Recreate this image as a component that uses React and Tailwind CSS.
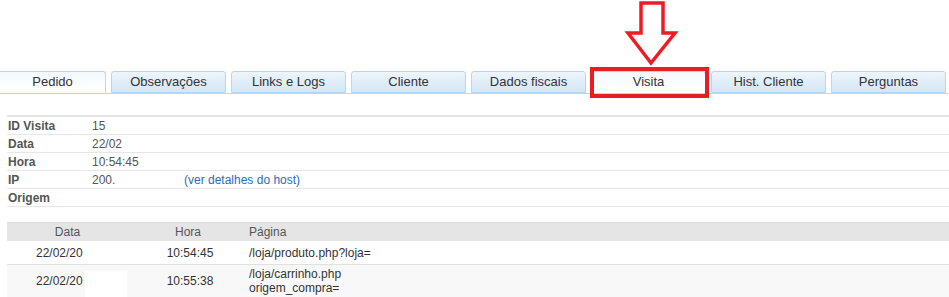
import React from "react";

const tabs = [
  { label: "Pedido", active: true },
  { label: "Observações" },
  { label: "Links e Logs" },
  { label: "Cliente" },
  { label: "Dados fiscais" },
  { label: "Visita", active: true, marked: true },
  { label: "Hist. Cliente" },
  { label: "Perguntas" },
];

const info = [
  ["ID Visita", "15"],
  ["Data", "22/02"],
  ["Hora", "10:54:45"],
  ["IP", "200.", "(ver detalhes do host)"],
  ["Origem", ""],
];

function Tab({ label, active, marked, first }) {
  return (
    <div className={`relative ${first ? "w-[106px]" : "w-[115px]"} shrink-0`}>
      <div
        className={`h-[22px] flex items-center justify-center text-[13px] text-[#333] border border-[#b9d6f0] rounded-t-[3px] ${
          active
            ? "bg-gradient-to-b from-[#f4f9fe] to-[#ffffff] border-b-white"
            : "bg-gradient-to-b from-[#eef5fc] to-[#d3e6f7]"
        } ${first ? "border-l-0 rounded-tl-none" : ""}`}
      >
        {label}
      </div>
      {marked && (
        <div className="absolute left-[-1px] top-[-4px] w-[119px] h-[31px] border-[4px] border-[#ec1c24] pointer-events-none" />
      )}
    </div>
  );
}

export default function App() {
  return (
    <div className="w-[949px] h-[297px] bg-white overflow-hidden font-['Liberation_Sans',Arial,sans-serif] relative">
      <svg className="absolute left-[624px] top-0" width="56" height="68" viewBox="0 0 56 68">
        <polygon
          points="17,3 39,3 39,33 51,33 27,63 4,33 17,33"
          fill="none"
          stroke="#ec1c24"
          strokeWidth="3.5"
          strokeLinejoin="miter"
        />
      </svg>

      <div className="pt-[71px]">
        <div className="flex gap-[5px] border-b border-[#b9d6f0]">
          {tabs.map((t, i) => (
            <Tab key={t.label} {...t} first={i === 0} />
          ))}
        </div>
      </div>

      <div className="ml-[7px] mt-[21px] border-t-2 border-[#e3e3e3]">
        {info.map(([k, v, link]) => (
          <div key={k} className="flex h-[18px] items-center border-b border-[#e6e6e6] text-[12px]">
            <div className="w-[85px] pl-[1px] font-bold text-[#555]">{k}</div>
            <div className="w-[92px] text-[#555]">{v}</div>
            {link && <a className="text-[#2a6ebb]">{link}</a>}
          </div>
        ))}
      </div>

      <div className="ml-[7px] mt-[15px] text-[12px] text-[#333]">
        <div className="flex h-[19px] items-center bg-[#e5e5e5] text-[#555] border-t border-[#dcdcdc]">
          <div className="w-[121px] text-center">Data</div>
          <div className="w-[120px] text-center">Hora</div>
          <div className="pl-[1px]">Página</div>
        </div>
        <div className="flex h-[24px] items-center bg-white border-b border-[#e1e1e1]">
          <div className="w-[121px] pl-[29px]">22/02/20</div>
          <div className="w-[120px] text-center pl-[4px]">10:54:45</div>
          <div className="pl-[1px]">/loja/produto.php?loja=</div>
        </div>
        <div className="flex h-[32px] items-center bg-[#f8f8f8]">
          <div className="w-[121px] pl-[29px] flex items-center h-full">
            <span>22/02/20</span>
            <span className="ml-[2px] mt-[6px] w-[42px] h-[26px] bg-white" />
          </div>
          <div className="w-[120px] text-center pl-[4px]">10:55:38</div>
          <div className="pl-[1px] leading-[14px]">
            <div>/loja/carrinho.php</div>
            <div>origem_compra=</div>
          </div>
        </div>
      </div>
    </div>
  );
}
